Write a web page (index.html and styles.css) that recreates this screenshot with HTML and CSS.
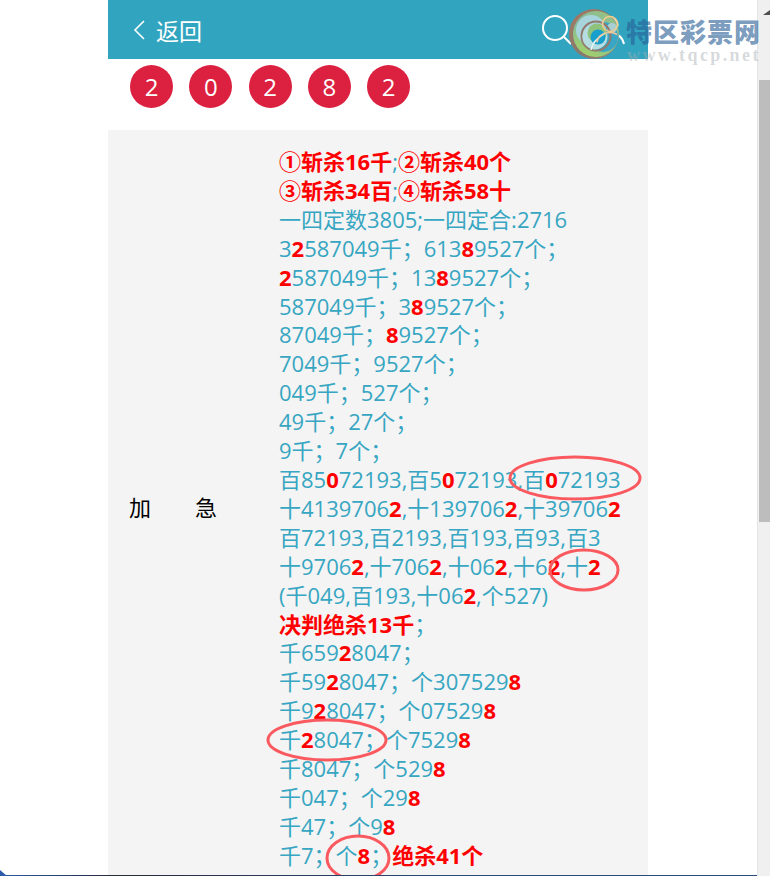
FILE: index.html
```html
<!DOCTYPE html>
<html lang="zh-CN">
<head>
  <meta charset="UTF-8" />
  <meta name="viewport" content="width=device-width, initial-scale=1" />
  <title>特区彩票网</title>
  <link rel="stylesheet" href="styles.css">
</head>
<body>
  <div class="window">
    <div class="page">
      <header class="topbar">
        <a class="back" href="#">
          <svg class="back-icon" width="14" height="22" viewBox="0 0 14 22"><path d="M12 2 L3 11 L12 20" /></svg>
          <span>返回</span>
        </a>
        <div class="top-icons">
          <svg width="34" height="34" viewBox="0 0 34 34"><circle cx="14" cy="13" r="12" /><path d="M23 22 L30 29" /></svg>
          <svg width="30" height="34" viewBox="0 0 30 34"><circle cx="15" cy="10" r="7.5" /><path d="M2 28 C3 21 9 18 15 18 C21 18 27 21 29 29" /></svg>
        </div>
      </header>

      <div class="balls">
        <span class="ball">2</span>
        <span class="ball">0</span>
        <span class="ball">2</span>
        <span class="ball">8</span>
        <span class="ball">2</span>
      </div>

      <div class="plan">
        <div class="plan-label">加　　急</div>
        <div class="plan-text">
          <div><b>①斩杀16千</b>;<b>②斩杀40个</b></div>
          <div><b>③斩杀34百</b>;<b>④斩杀58十</b></div>
          <div>一四定数3805;一四定合:2716</div>
          <div>3<b>2</b>587049千；613<b>8</b>9527个；</div>
          <div><b>2</b>587049千；13<b>8</b>9527个；</div>
          <div>587049千；3<b>8</b>9527个；</div>
          <div>87049千；<b>8</b>9527个；</div>
          <div>7049千；9527个；</div>
          <div>049千；527个；</div>
          <div>49千；27个；</div>
          <div>9千；7个；</div>
          <div>百85<b>0</b>72193,百5<b>0</b>72193,百<b>0</b>72193</div>
          <div>十4139706<b>2</b>,十139706<b>2</b>,十39706<b>2</b></div>
          <div>百72193,百2193,百193,百93,百3</div>
          <div>十9706<b>2</b>,十706<b>2</b>,十06<b>2</b>,十6<b>2</b>,十<b>2</b></div>
          <div>(千049,百193,十06<b>2</b>,个527)</div>
          <div><b>决判绝杀13千</b>；</div>
          <div>千659<b>2</b>8047；</div>
          <div>千59<b>2</b>8047；个307529<b>8</b></div>
          <div>千9<b>2</b>8047；个07529<b>8</b></div>
          <div>千<b>2</b>8047；个7529<b>8</b></div>
          <div>千8047；个529<b>8</b></div>
          <div>千047；个29<b>8</b></div>
          <div>千47；个9<b>8</b></div>
          <div>千7；个<b>8</b>；<b>绝杀41个</b></div>
        </div>
      </div>
    </div>

    <div class="scrollbar">
      <div class="scroll-up"></div>
      <div class="scroll-thumb"></div>
    </div>

    <!-- hand drawn red rings over the numbers -->
    <svg class="rings" width="770" height="876" viewBox="0 0 770 876">
      <ellipse cx="575" cy="478" rx="65" ry="21" />
      <ellipse cx="584" cy="570" rx="34" ry="20" />
      <ellipse cx="327" cy="740" rx="59" ry="20" />
      <ellipse cx="358" cy="858" rx="31" ry="22" />
    </svg>

    <div class="watermark">
      <svg width="54" height="54" viewBox="0 0 54 54">
        <defs>
          <linearGradient id="swirlOuter" x1="0" y1="0" x2="1" y2="1">
            <stop offset="0" stop-color="#a8765e" />
            <stop offset="0.55" stop-color="#857a70" />
            <stop offset="1" stop-color="#a07a70" />
          </linearGradient>
          <linearGradient id="swirlMid" x1="0.8" y1="0" x2="0.3" y2="1">
            <stop offset="0" stop-color="#9cc47a" />
            <stop offset="0.45" stop-color="#7fb8a8" />
            <stop offset="1" stop-color="#a4d264" />
          </linearGradient>
        </defs>
        <circle cx="27" cy="27" r="25" fill="url(#swirlOuter)" />
        <circle cx="29" cy="27" r="23" fill="url(#swirlMid)" />
        <circle cx="36" cy="30" r="15" fill="#3aa6c6" />
        <circle cx="45" cy="21" r="5" fill="#a9cfd2" />
        <circle cx="24" cy="23" r="15" fill="#a8d4dc" />
        <circle cx="29" cy="29" r="14.5" fill="none" stroke="#93786c" stroke-width="2" />
        <circle cx="28" cy="30" r="12.5" fill="#b6dde2" />
        <circle cx="30" cy="26" r="9.5" fill="#8fc27a" />
        <circle cx="31" cy="30" r="7.5" fill="#189fcc" />
        <path d="M24 43 C25 36 30 31 38 26" fill="none" stroke="#e6f4f6" stroke-width="1.5" />
        <!-- the user icon shows through the logo -->
        <circle cx="43" cy="17" r="7.5" fill="none" stroke="#f2cb8e" stroke-width="1.6" />
        <path d="M30 35.5 C31 28.5 37 25.5 43 25.5 C46 25.5 48 26 50 27.5" fill="none" stroke="#eec79a" stroke-width="1.6" />
      </svg>
      <div class="watermark-text">
        <div class="wm-name">特区彩票网</div>
        <div class="wm-url">www.tqcp.net</div>
      </div>
    </div>

    <div class="bottom-edge"></div>
  </div>
</body>
</html>
```

FILE: styles.css
```css
html, body {
  margin: 0;
  height: 100%;
  overflow: hidden;
  background: #fff;
}

body {
  font-family: "Open Sans", "Noto Sans CJK SC", sans-serif;
}

.window {
  position: relative;
  display: flex;
  height: 100vh;
  overflow: hidden;
}

.page {
  flex: 1;
  min-width: 0;
  padding-right: 1px;
  display: flex;
  flex-direction: column;
  align-items: center;
}

.topbar {
  width: 540px;
  height: 59px;
  flex: none;
  box-sizing: border-box;
  padding: 0 23px 0 24px;
  background: #31a5bf;
  display: flex;
  align-items: center;
  justify-content: space-between;
  color: #fff;
}

.back {
  display: flex;
  align-items: center;
  gap: 10px;
  color: #fff;
  text-decoration: none;
  font-size: 23px;
}

.back-icon path {
  fill: none;
  stroke: #fff;
  stroke-width: 1.6;
}

.top-icons {
  display: flex;
  align-items: center;
  gap: 20px;
  margin-top: 4px;
}

.top-icons svg {
  fill: none;
  stroke: #fff;
  stroke-width: 2;
}

.balls {
  width: 540px;
  flex: none;
  box-sizing: border-box;
  padding: 6px 0 22px 22px;
  display: flex;
  gap: 16.25px;
}

.ball {
  width: 43px;
  height: 43px;
  border-radius: 50%;
  background: #dc2140;
  color: #fff;
  font-size: 24px;
  line-height: 43px;
  text-align: center;
}

.plan {
  width: 540px;
  flex: none;
  display: flex;
  background: #f4f4f4;
}

.plan-label {
  width: 171px;
  flex: none;
  box-sizing: border-box;
  padding-left: 21px;
  display: flex;
  align-items: center;
  font-size: 22px;
  color: #000;
}

.plan-text {
  flex: 1;
  padding: 17px 0 13px;
  font-size: 22px;
  line-height: 28.9px;
  color: #37a6c2;
  white-space: nowrap;
}

.plan-text b {
  color: #f00;
  font-weight: 700;
}

.scrollbar {
  width: 13px;
  flex: none;
  box-sizing: border-box;
  border-left: 1px solid #e6e6e6;
  background: #f0f0f0;
  display: flex;
  flex-direction: column;
}

.scroll-up {
  height: 80px;
  flex: none;
  position: relative;
}

.scroll-up::before {
  content: "";
  position: absolute;
  top: 10px;
  left: 5px;
  border-left: 7px solid transparent;
  border-bottom: 5px solid #505050;
}

.scroll-thumb {
  height: 442px;
  flex: none;
  margin-left: 1px;
  background: #bdbdbd;
}

.rings {
  position: absolute;
  top: 0;
  left: 0;
  pointer-events: none;
}

.rings ellipse {
  fill: none;
  stroke: #fa5a5f;
  stroke-width: 3;
}

.watermark {
  position: absolute;
  top: 7px;
  left: 567px;
  display: flex;
  align-items: flex-start;
  gap: 5px;
}

.watermark-text {
  padding-top: 9px;
  white-space: nowrap;
}

.wm-name {
  font-family: "Noto Sans CJK SC", sans-serif;
  font-weight: 900;
  font-size: 26px;
  line-height: 30px;
  letter-spacing: 1px;
  color: rgba(38, 92, 150, 0.62);
}

.wm-url {
  padding-left: 1px;
  font-family: "Liberation Serif", serif;
  font-weight: 700;
  font-size: 18px;
  line-height: 18px;
  letter-spacing: 2.4px;
  color: rgba(165, 172, 176, 0.45);
}

.bottom-edge {
  position: absolute;
  left: 0;
  right: 13px;
  bottom: 0;
  height: 1px;
  background: linear-gradient(90deg, #2a5aa8, #262b3a 15%, #2d4a78 60%);
}

.bottom-edge::before {
  content: "";
  position: absolute;
  left: 0;
  bottom: 0;
  border-left: 7px solid #2a5aa8;
  border-top: 6px solid transparent;
}
```
